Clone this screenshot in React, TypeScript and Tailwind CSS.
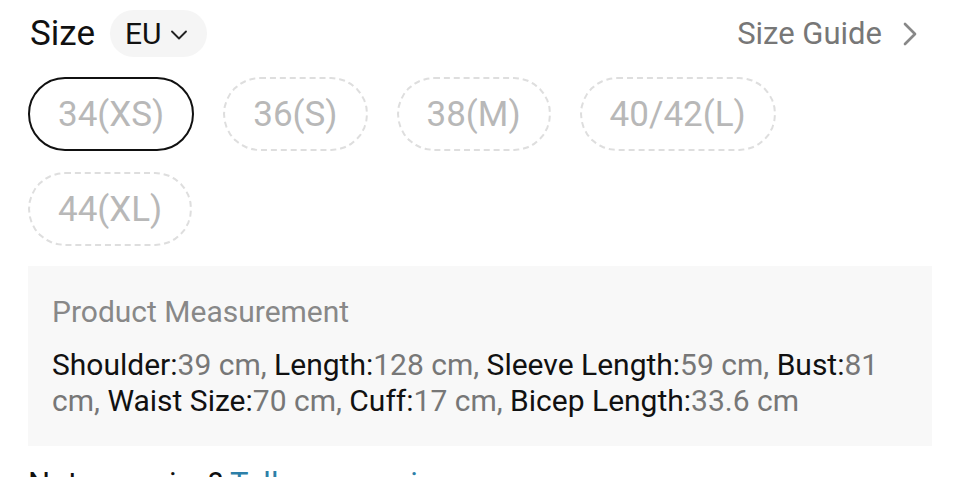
import { Fragment } from "react";
import { ChevronDown, ChevronRight } from "lucide-react";

const sizes = ["34(XS)", "36(S)", "38(M)", "40/42(L)", "44(XL)"];

const measurements = [
  { label: "Shoulder", value: "39 cm" },
  { label: "Length", value: "128 cm" },
  { label: "Sleeve Length", value: "59 cm" },
  { label: "Bust", value: "81 cm" },
  { label: "Waist Size", value: "70 cm" },
  { label: "Cuff", value: "17 cm" },
  { label: "Bicep Length", value: "33.6 cm" },
];

export default function App() {
  const selected = "34(XS)";

  return (
    <div
      className="w-[960px] h-[477px] overflow-hidden bg-white px-[28px] pt-[10px]"
      style={{ fontFamily: "Roboto, 'Noto Sans', sans-serif" }}
    >
      <div className="flex items-center justify-between h-[47px]">
        <div className="flex items-center gap-[15px]">
          <span className="text-[35px] text-[#111] leading-none ml-[2px]">Size</span>
          <button className="h-[47px] rounded-full bg-[#f5f5f5] flex items-center gap-[4px] pl-[15px] pr-[14px]">
            <span className="text-[30px] text-[#111] leading-none">EU</span>
            <ChevronDown size={28} strokeWidth={1.6} className="text-[#222] mt-[2px]" />
          </button>
        </div>
        <div className="flex items-center gap-[8px] text-[#777] pr-[2px]">
          <span className="text-[31px] leading-none">Size Guide</span>
          <ChevronRight size={40} strokeWidth={1.6} className="text-[#888]" />
        </div>
      </div>

      <div className="flex flex-wrap gap-x-[29px] gap-y-[21px] mt-[20px] w-[800px]">
        {sizes.map((s) => (
          <div
            key={s}
            className={
              s === selected
                ? "h-[74px] px-[28px] rounded-full border-2 border-[#111] flex items-center"
                : "h-[74px] px-[28px] rounded-full border-2 border-dashed border-[#dedede] flex items-center"
            }
          >
            <span className="text-[35px] text-[#b8b8b8] leading-none">{s}</span>
          </div>
        ))}
      </div>

      <div className="mt-[20px] bg-[#f8f8f8] px-[24px] pt-[31px] pb-[27px]">
        <div className="text-[30px] text-[#888] leading-none">Product Measurement</div>
        <p className="mt-[20px] text-[30px] leading-[36px] text-[#111]">
          {measurements.map((m, i) => (
            <Fragment key={m.label}>
              {m.label}:
              <span className="text-[#777]">
                {m.value}
                {i < measurements.length - 1 ? ", " : ""}
              </span>
            </Fragment>
          ))}
        </p>
      </div>

      <div className="mt-[22px] text-[31px] leading-none text-[#111]">
        Not sure size? <span className="text-[#2d7fa8]">Tell us your size</span>
      </div>
    </div>
  );
}
